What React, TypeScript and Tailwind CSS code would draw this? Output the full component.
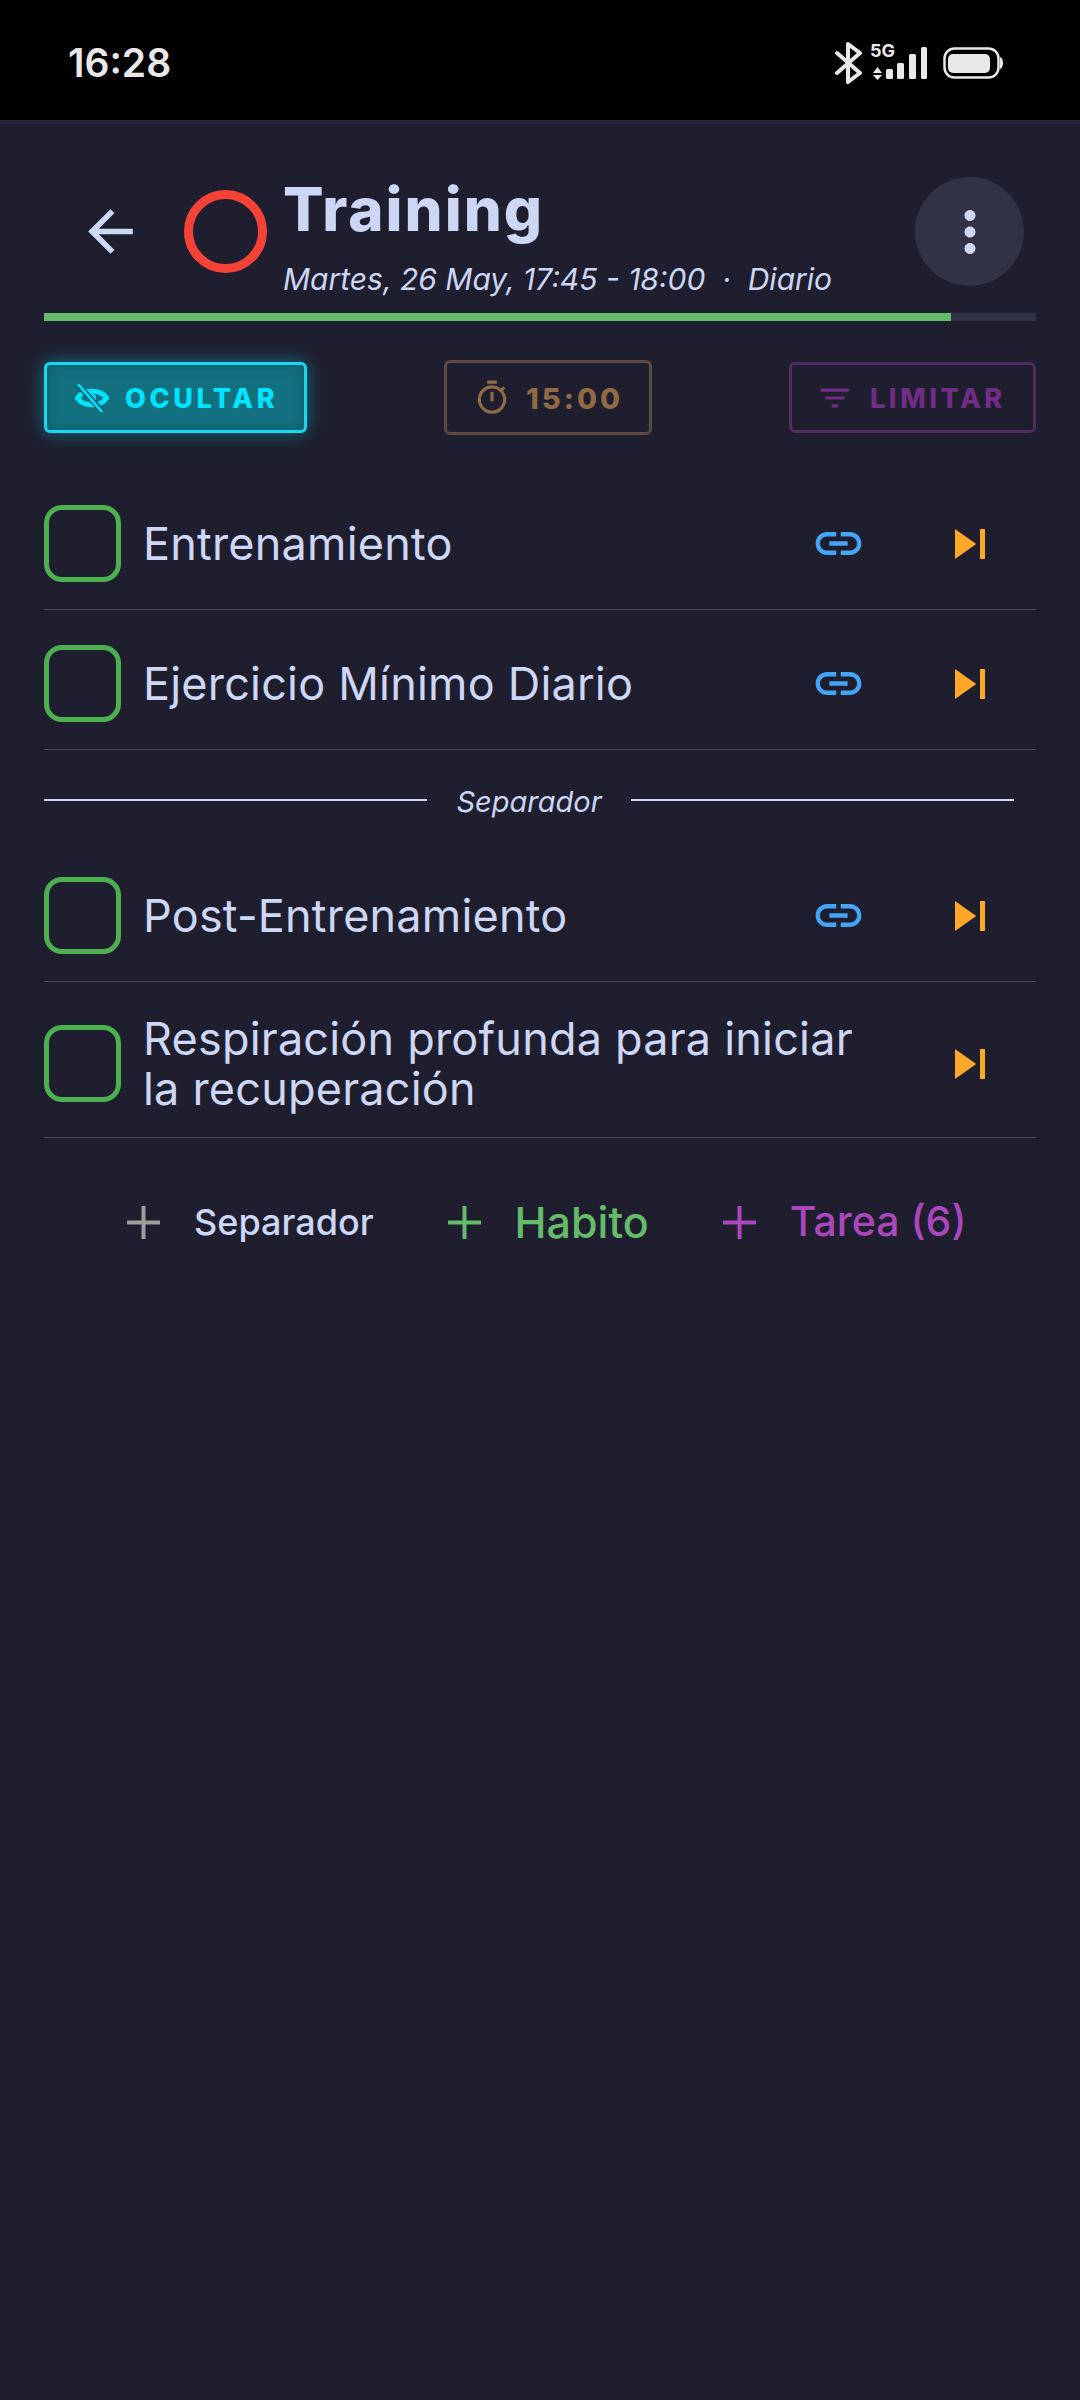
import { MdArrowBack, MdFilterList, MdLink, MdMoreVert, MdOutlineTimer, MdSkipNext } from "react-icons/md";

function StatusIcons() {
  return (
    <svg width="170" height="46" viewBox="0 0 170 46" fill="none" className="block">
      <path d="M2 13 L25 33 L13 42 V4 L25 13 L2 33" stroke="#e8e8e8" strokeWidth="4" strokeLinejoin="round" strokeLinecap="round" />
      <text x="35" y="17" fill="#e8e8e8" fontSize="18" fontWeight="700" fontFamily="Inter, sans-serif">5G</text>
      <path d="M38 33 L42.5 27 L47 33 Z M38 35 L47 35 L42.5 40 Z" fill="#e8e8e8" />
      <rect x="51" y="29" width="7" height="10" rx="1.5" fill="#e8e8e8" />
      <rect x="62" y="23" width="7" height="16" rx="1.5" fill="#e8e8e8" />
      <rect x="74" y="14" width="7" height="25" rx="1.5" fill="#e8e8e8" />
      <rect x="86" y="7" width="6" height="32" rx="1.5" fill="#e8e8e8" />
      <rect x="109.5" y="8.5" width="54" height="29" rx="10" stroke="#e8e8e8" strokeWidth="2.5" />
      <rect x="113" y="14" width="42" height="19" rx="5" fill="#e8e8e8" />
      <path d="M165 17 C169 18 169 28 165 29 Z" fill="#e8e8e8" />
    </svg>
  );
}

function EyeOff() {
  return (
    <svg width="34" height="28" viewBox="0 0 34 28" fill="none" className="block shrink-0">
      <path d="M2.5 14 C8 5 26 5 31.5 14 C26 23 8 23 2.5 14 Z" stroke="#00e5ff" strokeWidth="5" />
      <circle cx="17" cy="14" r="4" fill="#00e5ff" />
      <path d="M3 1 L27 27" stroke="#10687c" strokeWidth="6" />
      <path d="M3 0 L27 28" stroke="#00e5ff" strokeWidth="2.5" />
    </svg>
  );
}

function Row({ title, link = true, tall = false }: { title: React.ReactNode; link?: boolean; tall?: boolean }) {
  return (
    <div className={`flex items-center pt-[8px] border-b border-[#45475a] ${tall ? "h-[156px]" : "h-[140px]"}`}>
      <div className="w-[77px] h-[77px] shrink-0 rounded-[18px] border-[5px] border-[#4caf50]" />
      <div className="flex-1 pl-[22px] text-[45px] leading-[50px] tracking-[0.2px] text-[#cdd6f4]">{title}</div>
      {link && (
        <div className="w-[132px] flex justify-center text-[#42a5f5]">
          <MdLink size={55} />
        </div>
      )}
      <div className="w-[132px] flex justify-center text-[#ffa726]">
        <MdSkipNext size={60} />
      </div>
    </div>
  );
}

function AddButton({ label, plus, color, size }: { label: string; plus: string; color: string; size: string }) {
  return (
    <div className="flex items-center gap-[34px]">
      <span className={plus}>
        <svg width="33" height="33" viewBox="0 0 33 33" className="block">
          <path d="M16.5 0V33M0 16.5H33" stroke="currentColor" strokeWidth="4" />
        </svg>
      </span>
      <span className={`font-medium ${color} ${size}`}>{label}</span>
    </div>
  );
}

export default function App() {
  return (
    <div className="w-[1080px] h-[2400px] bg-[#1e1e2e] font-['Inter',sans-serif] overflow-hidden">
      <div className="h-[120px] bg-black flex items-center justify-between pl-[68px] pr-[75px]">
        <span className="text-[39px] font-semibold text-[#e8e8e8] leading-none pt-1">16:28</span>
        <div className="pt-[6px]">
          <StatusIcons />
        </div>
      </div>
      <div className="h-[4px] bg-[#25253a]" />

      <div className="px-[44px]">
        <div className="flex items-center h-[189px] pt-[26px]">
          <div className="w-[140px] pl-[33px] text-[#cdd6f4]">
            <MdArrowBack size={67} />
          </div>
          <div className="w-[83px] h-[83px] shrink-0 rounded-full border-[9px] border-[#f44336]" />
          <div className="flex-1 pl-[16px] pt-[10px]">
            <div className="text-[60px] leading-[70px] font-extrabold tracking-[2px] text-[#cdd6f4]">Training</div>
            <div className="mt-[15px] text-[30px] leading-[40px] italic whitespace-nowrap text-[#cdd6f4]">
              Martes, 26 May, 17:45 - 18:00 {"\u00a0"}·{"\u00a0"} Diario
            </div>
          </div>
          <div className="w-[109px] h-[109px] mr-[12px] rounded-full bg-[#313244] flex items-center justify-center text-[#cdd6f4]">
            <MdMoreVert size={66} />
          </div>
        </div>

        <div className="h-[8px] bg-[#313244]">
          <div className="h-full bg-[#66bb6a]" style={{ width: "91.4%" }} />
        </div>

        <div className="flex items-center justify-between h-[75px] mt-[39px] mb-[35px]">
          <div className="w-[263px] h-[71px] flex items-center pl-[28px] gap-[16px] rounded-[6px] border-[3px] border-[#18d8f0] bg-[#12707f] shadow-[0_0_18px_#00e5ff66,inset_0_0_12px_#0e5a6a] text-[#00e5ff]">
            <EyeOff />
            <span className="text-[27px] leading-none pt-[2px] font-extrabold tracking-[3.6px]">OCULTAR</span>
          </div>
          <div className="w-[208px] h-[75px] flex items-center pl-[26px] gap-[15px] rounded-[6px] border-[3px] border-[#5e4a42] text-[#8f6a45]">
            <MdOutlineTimer size={38} />
            <span className="text-[29px] leading-none pt-[2px] font-extrabold tracking-[3px]">15:00</span>
          </div>
          <div className="w-[247px] h-[71px] flex items-center pl-[24px] gap-[16px] rounded-[6px] border-[3px] border-[#4e2c5f] text-[#702d86]">
            <MdFilterList size={38} />
            <span className="text-[27px] leading-none pt-[2px] font-extrabold tracking-[3.6px]">LIMITAR</span>
          </div>
        </div>

        <Row title="Entrenamiento" />
        <Row title="Ejercicio Mínimo Diario" />

        <div className="flex items-center h-[92px] pt-[8px] pr-[22px]">
          <div className="flex-1 h-[2px] bg-[#cdd6f4]" />
          <span className="px-[29px] text-[29px] pt-[4px] italic text-[#cdd6f4]">Separador</span>
          <div className="flex-1 h-[2px] bg-[#cdd6f4]" />
        </div>

        <Row title="Post-Entrenamiento" />
        <Row
          tall
          link={false}
          title={
            <>
              Respiración profunda para iniciar
              <br />
              la recuperación
            </>
          }
        />

        <div className="flex items-center gap-[74px] pl-[83px] h-[168px]">
          <AddButton label="Separador" plus="text-[#9e9e9e]" color="text-[#cdd6f4]" size="text-[36px]" />
          <AddButton label="Habito" plus="text-[#66bb6a]" color="text-[#66bb6a]" size="text-[43px]" />
          <AddButton label="Tarea (6)" plus="text-[#ab47bc]" color="text-[#ab47bc]" size="text-[41px]" />
        </div>
      </div>
    </div>
  );
}
